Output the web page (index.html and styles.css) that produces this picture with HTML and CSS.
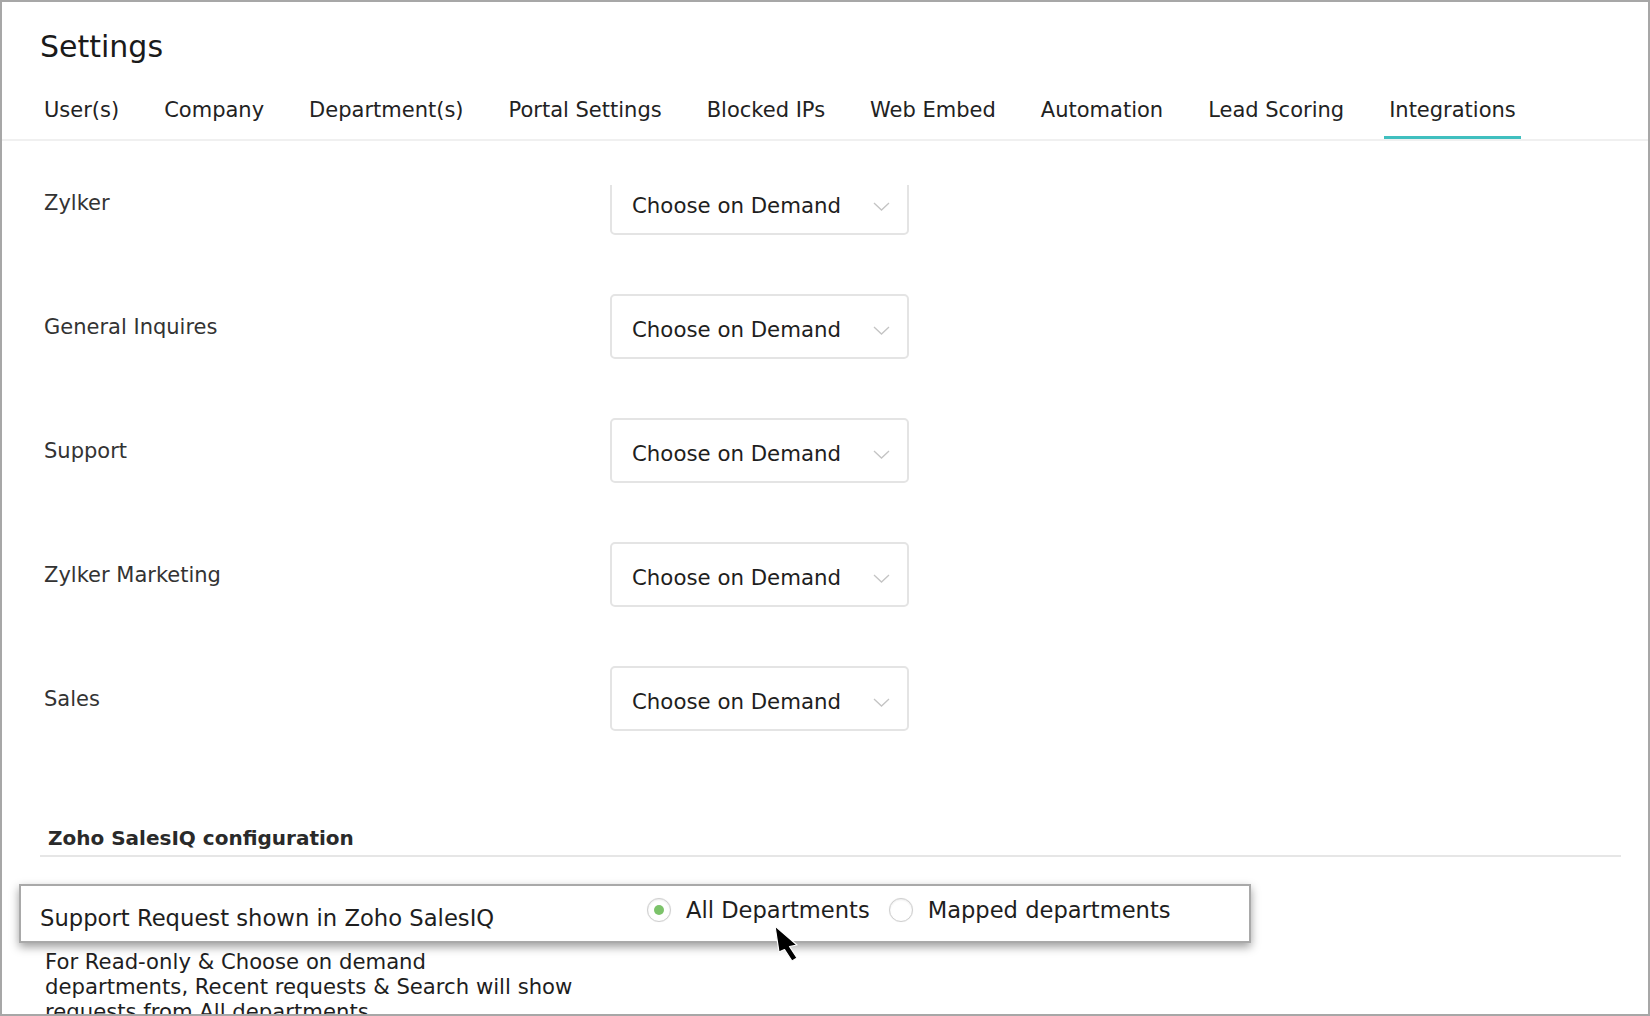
FILE: index.html
```html
<!DOCTYPE html>
<html lang="en">
<head>
<meta charset="utf-8">
<title>Settings - Integrations</title>
<link rel="stylesheet" href="styles.css">
</head>
<body>
<div class="frame">
  <header class="header">
    <h1 class="title">Settings</h1>
    <nav class="tabs">
      <span class="tab">User(s)</span>
      <span class="tab">Company</span>
      <span class="tab">Department(s)</span>
      <span class="tab">Portal Settings</span>
      <span class="tab">Blocked IPs</span>
      <span class="tab">Web Embed</span>
      <span class="tab">Automation</span>
      <span class="tab">Lead Scoring</span>
      <span class="tab active">Integrations</span>
    </nav>
  </header>
  <main class="scroll">
    <div class="scroll-inner">
      <div class="dept-list">
        <div class="dept-row">
          <span class="dept-name">Zylker</span>
          <div class="select"><span class="select-value">Choose on Demand</span><svg class="chev" viewBox="0 0 17 9" width="17" height="9"><polyline points="1,1 8.5,8 16,1"/></svg></div>
        </div>
        <div class="dept-row">
          <span class="dept-name">General Inquires</span>
          <div class="select"><span class="select-value">Choose on Demand</span><svg class="chev" viewBox="0 0 17 9" width="17" height="9"><polyline points="1,1 8.5,8 16,1"/></svg></div>
        </div>
        <div class="dept-row">
          <span class="dept-name">Support</span>
          <div class="select"><span class="select-value">Choose on Demand</span><svg class="chev" viewBox="0 0 17 9" width="17" height="9"><polyline points="1,1 8.5,8 16,1"/></svg></div>
        </div>
        <div class="dept-row">
          <span class="dept-name">Zylker Marketing</span>
          <div class="select"><span class="select-value">Choose on Demand</span><svg class="chev" viewBox="0 0 17 9" width="17" height="9"><polyline points="1,1 8.5,8 16,1"/></svg></div>
        </div>
        <div class="dept-row">
          <span class="dept-name">Sales</span>
          <div class="select"><span class="select-value">Choose on Demand</span><svg class="chev" viewBox="0 0 17 9" width="17" height="9"><polyline points="1,1 8.5,8 16,1"/></svg></div>
        </div>
      </div>
      <section class="salesiq">
        <h2 class="section-title">Zoho SalesIQ configuration</h2>
        <div class="highlight">
          <span class="hl-label">Support Request shown in Zoho SalesIQ</span>
          <div class="radios">
            <span class="radio"><span class="circle on"></span>All Departments</span>
            <span class="radio"><span class="circle"></span>Mapped departments</span>
          </div>
        </div>
        <p class="note">For Read-only &amp; Choose on demand<br>departments, Recent requests &amp; Search will show<br>requests from All departments</p>
      </section>
    </div>
  </main>
  <svg class="cursor" viewBox="0 0 30 40" width="30" height="40"><polygon points="2,2 24,21 16.5,22.5 24,34 19,37 11.5,25.5 6,28"/></svg>
</div>
</body>
</html>
```

FILE: styles.css
```css
* { box-sizing: border-box; }

html, body {
  margin: 0;
  padding: 0;
  background: #ffffff;
}

body {
  font-family: "DejaVu Sans", "Liberation Sans", sans-serif;
  color: #222222;
}

.frame {
  position: relative;
  width: 1650px;
  height: 1016px;
  border: 2px solid #a7a7a7;
  background: #ffffff;
  overflow: hidden;
  display: flex;
  flex-direction: column;
}

.header {
  flex: 0 0 auto;
  padding-left: 37px;
  border-bottom: 2px solid #f0f0f0;
}

.title {
  margin: 25px 0 0 1px;
  font-size: 30px;
  font-weight: normal;
  line-height: 40px;
  color: #1a1a1a;
}

.tabs {
  display: flex;
  gap: 35px;
  margin-top: 28px;
}

.tab {
  font-size: 21px;
  line-height: 30px;
  padding: 0 5px 11px;
  border-bottom: 3px solid transparent;
  color: #222222;
  white-space: nowrap;
}

.tab.active {
  border-bottom-color: #40bfbf;
}

.scroll {
  flex: 1 1 auto;
  margin-top: 44px;
  overflow: hidden;
}

.scroll-inner {
  margin-top: -15px;
}

.dept-list {
  display: flex;
  flex-direction: column;
  gap: 59px;
  padding-left: 42px;
}

.dept-row {
  display: grid;
  grid-template-columns: 566px 299px;
  align-items: center;
  height: 65px;
}

.dept-name {
  font-size: 21px;
  color: #333333;
  line-height: 30px;
}

.select {
  height: 65px;
  border: 2px solid #e4e4e4;
  border-radius: 5px;
  display: flex;
  align-items: center;
  justify-content: space-between;
  padding: 6px 17px 0 20px;
  background: #ffffff;
}

.select-value {
  font-size: 21.3px;
  color: #1e1e1e;
  line-height: 30px;
}

.chev {
  display: block;
  margin-top: 2px;
}

.chev polyline {
  fill: none;
  stroke: #c4c4c4;
  stroke-width: 1.3;
}

.salesiq {
  margin-top: 94px;
}

.section-title {
  margin: 0 27px 0 38px;
  padding: 0 0 4px 8px;
  font-size: 20px;
  font-weight: bold;
  line-height: 26px;
  color: #2a2a2a;
  border-bottom: 2px solid #e6e6e6;
}

.highlight {
  margin: 27px 0 0 17px;
  width: 1232px;
  height: 59px;
  border: 2px solid #a9a9a9;
  background: #ffffff;
  box-shadow: 0 4px 9px rgba(0, 0, 0, 0.38);
  display: flex;
  align-items: flex-start;
  padding-left: 19px;
}

.hl-label {
  flex: 0 0 607px;
  margin-top: 17px;
  font-size: 22.7px;
  line-height: 30px;
  color: #1e1e1e;
  white-space: nowrap;
}

.radios {
  display: flex;
  align-items: center;
  margin-top: 9px;
  height: 30px;
}

.radio {
  display: flex;
  align-items: center;
  gap: 15px;
  font-size: 22.6px;
  line-height: 30px;
  color: #1e1e1e;
  white-space: nowrap;
}

.radio + .radio {
  margin-left: 19px;
}

.circle {
  width: 24px;
  height: 24px;
  border-radius: 50%;
  border: 1px solid #cfcfcf;
  background: #ffffff;
  box-shadow: inset 0 1px 2px rgba(0, 0, 0, 0.08), 0 0 1px rgba(0, 0, 0, 0.1);
  display: flex;
  align-items: center;
  justify-content: center;
}

.circle.on::after {
  content: "";
  width: 10px;
  height: 10px;
  border-radius: 50%;
  background: #7cc36a;
}

.note {
  margin: 6px 0 0 0;
  padding-left: 43px;
  font-size: 21.2px;
  line-height: 25px;
  color: #1e1e1e;
}

.cursor {
  position: absolute;
  left: 771px;
  top: 922px;
}

.cursor polygon {
  fill: #000000;
  stroke: #ffffff;
  stroke-width: 1.2;
  stroke-linejoin: round;
}
```
